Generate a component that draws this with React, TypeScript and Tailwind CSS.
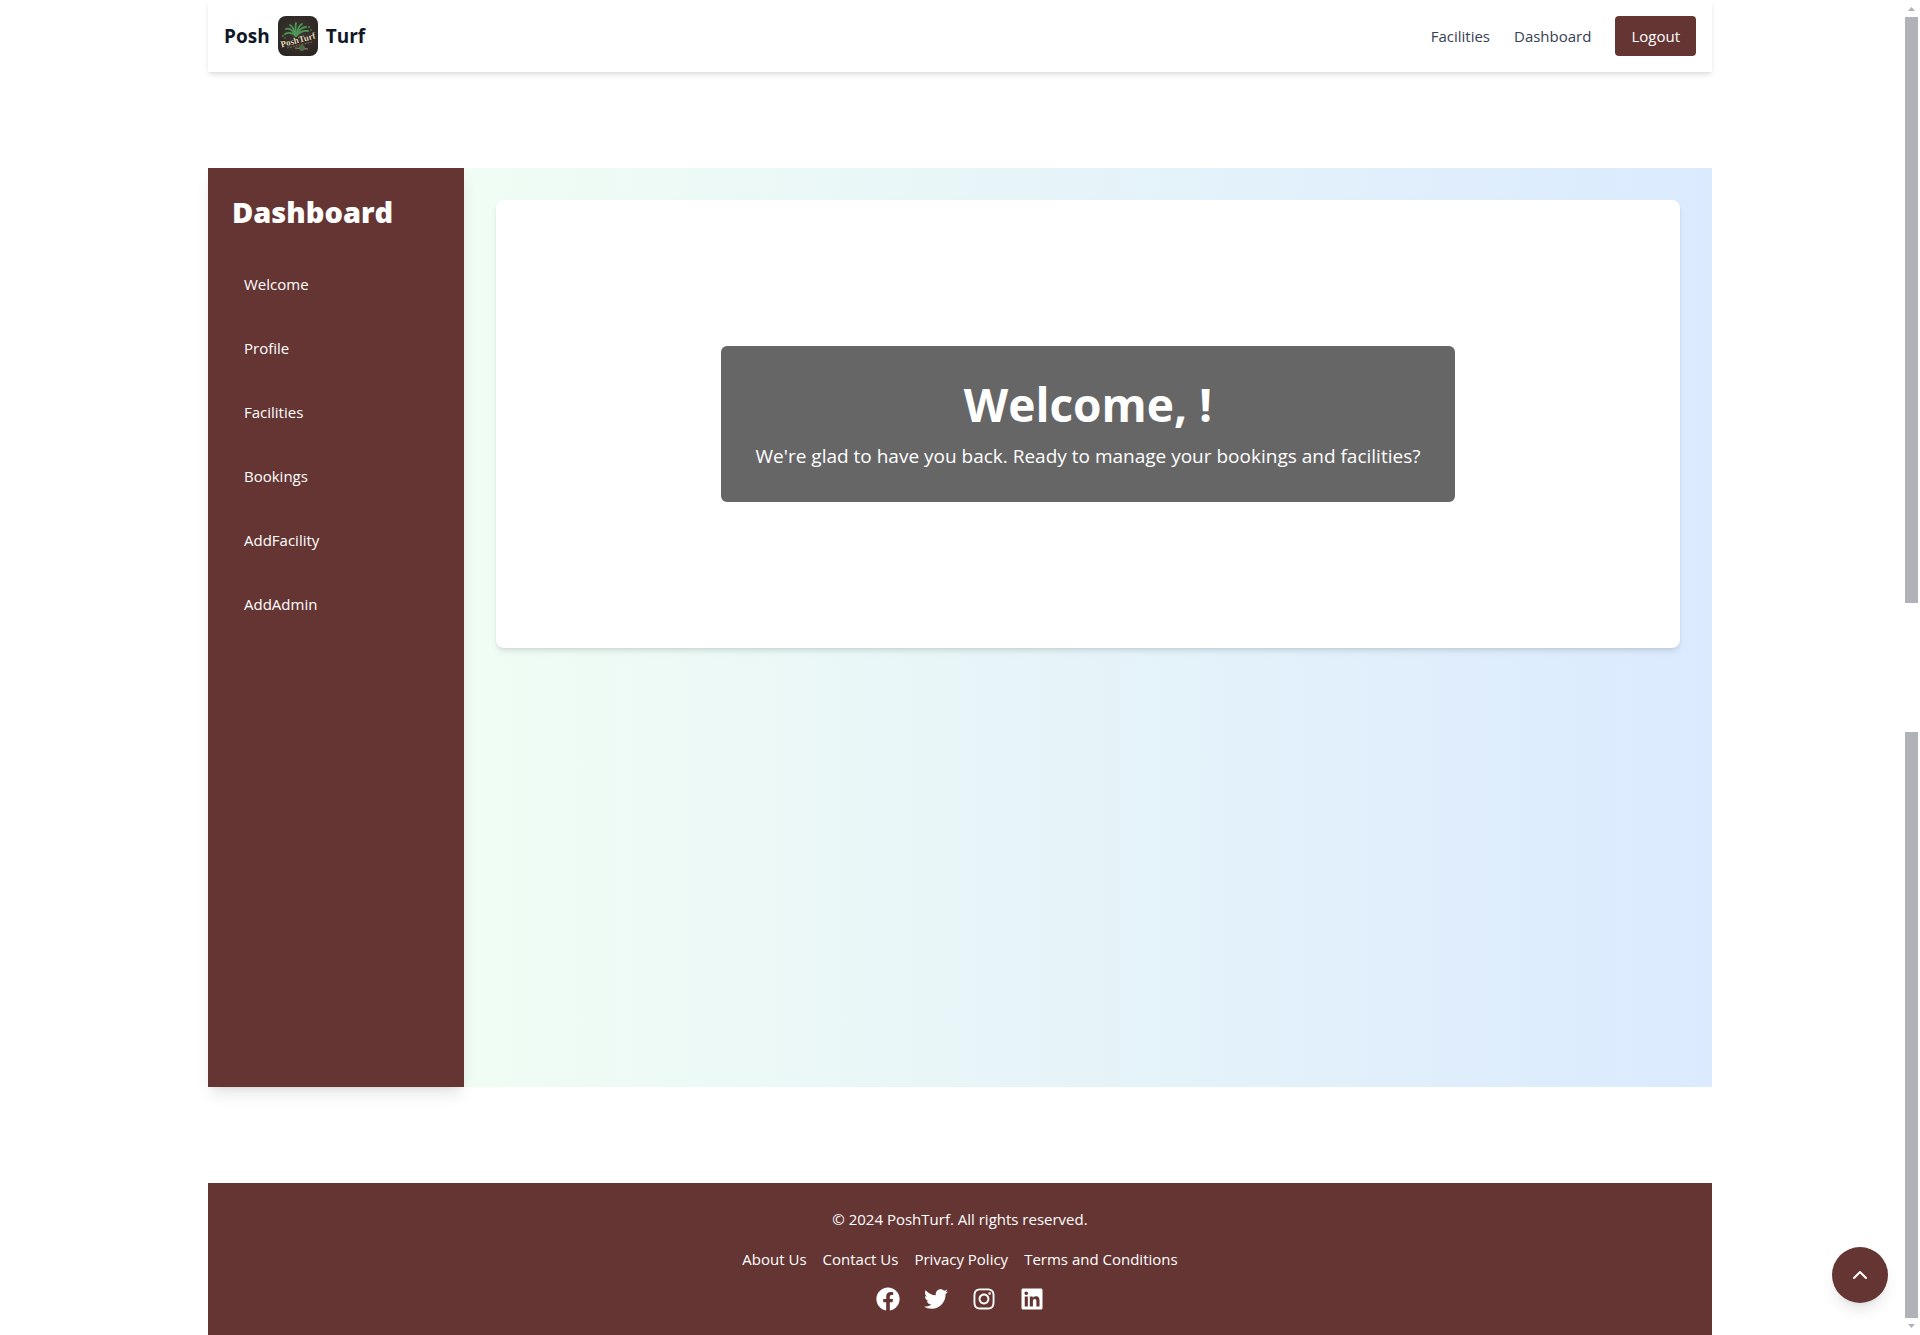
import { ChevronUp } from "lucide-react";
import { FaFacebook, FaTwitter, FaInstagram, FaLinkedin } from "react-icons/fa";

const menu = ["Welcome", "Profile", "Facilities", "Bookings", "AddFacility", "AddAdmin"];
const legal = ["About Us", "Contact Us", "Privacy Policy", "Terms and Conditions"];

function Logo() {
  return (
    <svg viewBox="0 0 40 40" className="size-10 rounded-lg" role="img" aria-label="PoshTurf logo">
      <defs>
        <radialGradient id="bg" cx="50%" cy="45%" r="75%">
          <stop offset="0" stopColor="#3d3833" />
          <stop offset="1" stopColor="#28231f" />
        </radialGradient>
      </defs>
      <rect width="40" height="40" fill="url(#bg)" />
      <g stroke="#4d9654" strokeWidth="1.8" fill="none" strokeLinecap="round">
        <path d="M18 20 Q13 15 7 18" />
        <path d="M18 20 Q13 11 8 13" />
        <path d="M18 20 Q15 10 12 9" />
        <path d="M18 20 Q17 11 18 7" />
        <path d="M18 20 Q20 10 24 8" />
        <path d="M18 20 Q22 11 28 11" />
        <path d="M18 20 Q23 14 30 15" />
      </g>
      <g fill="#4a8d50">
        <circle cx="5" cy="20" r="1" />
        <circle cx="7" cy="22" r="0.8" />
        <circle cx="31" cy="11" r="1" />
        <circle cx="33" cy="14" r="0.8" />
        <circle cx="36" cy="21" r="0.8" />
      </g>
      <text
        x="20"
        y="27"
        textAnchor="middle"
        transform="rotate(-15 20 24)"
        fill="#e6d9ba"
        stroke="#1c1815"
        strokeWidth="1"
        paintOrder="stroke"
        className="font-['Liberation_Serif',serif] text-[9px] font-bold"
      >
        PoshTurf
      </text>
      <path d="M9 32 L34 26" stroke="#6c6152" strokeWidth="1.2" strokeDasharray="2 1" />
      <path d="M17 32 L30 33" stroke="#a08d68" strokeWidth="1" />
      <circle cx="24" cy="32" r="2.5" fill="#3e6d45" stroke="#857655" strokeWidth="0.7" />
    </svg>
  );
}

function ScrollTrack() {
  return (
    <div aria-hidden="true" className="fixed inset-y-0 right-0 flex w-[17px] flex-col items-center justify-between py-[7px]">
      <svg viewBox="0 0 7 4" className="h-1 w-[7px]" fill="#afb2b7">
        <path d="M0 4 L3.5 0 L7 4Z" />
      </svg>
      <div className="my-[6px] flex w-[13px] flex-1 flex-col gap-[129px]">
        <div className="flex-1 bg-[#afb2b7]" />
        <div className="flex-1 bg-[#afb2b7]" />
      </div>
      <svg viewBox="0 0 7 4" className="h-1 w-[7px]" fill="#afb2b7">
        <path d="M0 0 L3.5 4 L7 0Z" />
      </svg>
    </div>
  );
}

export default function App() {
  return (
    <div className="min-h-screen bg-white font-['Open_Sans','Noto_Sans',sans-serif] text-[15px] leading-6">
      <div className="mx-auto flex min-h-screen max-w-[1536px] flex-col px-4">
        <header className="flex items-center justify-between bg-white p-4 shadow-md">
          <a href="#" className="flex items-center gap-2 text-[19px] leading-7 font-bold text-gray-900">
            <span>Posh</span>
            <Logo />
            <span>Turf</span>
          </a>
          <nav className="flex items-center gap-6 text-gray-700">
            <a href="#facilities">Facilities</a>
            <a href="#dashboard">Dashboard</a>
            <button type="button" className="rounded bg-[#653533] px-4 py-2 text-white">
              Logout
            </button>
          </nav>
        </header>

        <div className="my-24 flex flex-1">
          <aside className="z-10 w-64 shrink-0 bg-[#653533] p-6 text-white shadow-lg">
            <h2 className="mb-7 text-[29px] leading-10 font-extrabold">Dashboard</h2>
            <nav className="flex flex-col gap-4">
              {menu.map((item) => (
                <a key={item} href={`#${item}`} className="block rounded p-3">
                  {item}
                </a>
              ))}
            </nav>
          </aside>
          <main className="flex-1 bg-linear-to-r/srgb from-[#f0fdf4] to-[#dbeafe] p-8">
            <section className="flex h-112 items-center justify-center rounded-lg bg-white shadow-md">
              <div className="rounded-md bg-[#666666] px-[35px] py-8 text-center text-white">
                <h1 className="mb-3 text-[46px] leading-[52px] font-bold">Welcome, !</h1>
                <p className="text-[19px] leading-7">
                  We're glad to have you back. Ready to manage your bookings and facilities?
                </p>
              </div>
            </section>
          </main>
        </div>

        <footer className="flex flex-col items-center gap-4 bg-[#653533] p-6 text-white">
          <p>© 2024 PoshTurf. All rights reserved.</p>
          <nav className="flex gap-4">
            {legal.map((item) => (
              <a key={item} href="#">
                {item}
              </a>
            ))}
          </nav>
          <div className="flex gap-6">
            <a href="#" aria-label="Facebook">
              <FaFacebook size={24} />
            </a>
            <a href="#" aria-label="Twitter">
              <FaTwitter size={24} />
            </a>
            <a href="#" aria-label="Instagram">
              <FaInstagram size={24} />
            </a>
            <a href="#" aria-label="LinkedIn">
              <FaLinkedin size={24} />
            </a>
          </div>
        </footer>
      </div>

      <button
        type="button"
        aria-label="Back to top"
        className="fixed right-8 bottom-8 flex size-14 items-center justify-center rounded-full bg-[#653533] text-white shadow-lg"
      >
        <ChevronUp size={24} />
      </button>
      <ScrollTrack />
    </div>
  );
}
